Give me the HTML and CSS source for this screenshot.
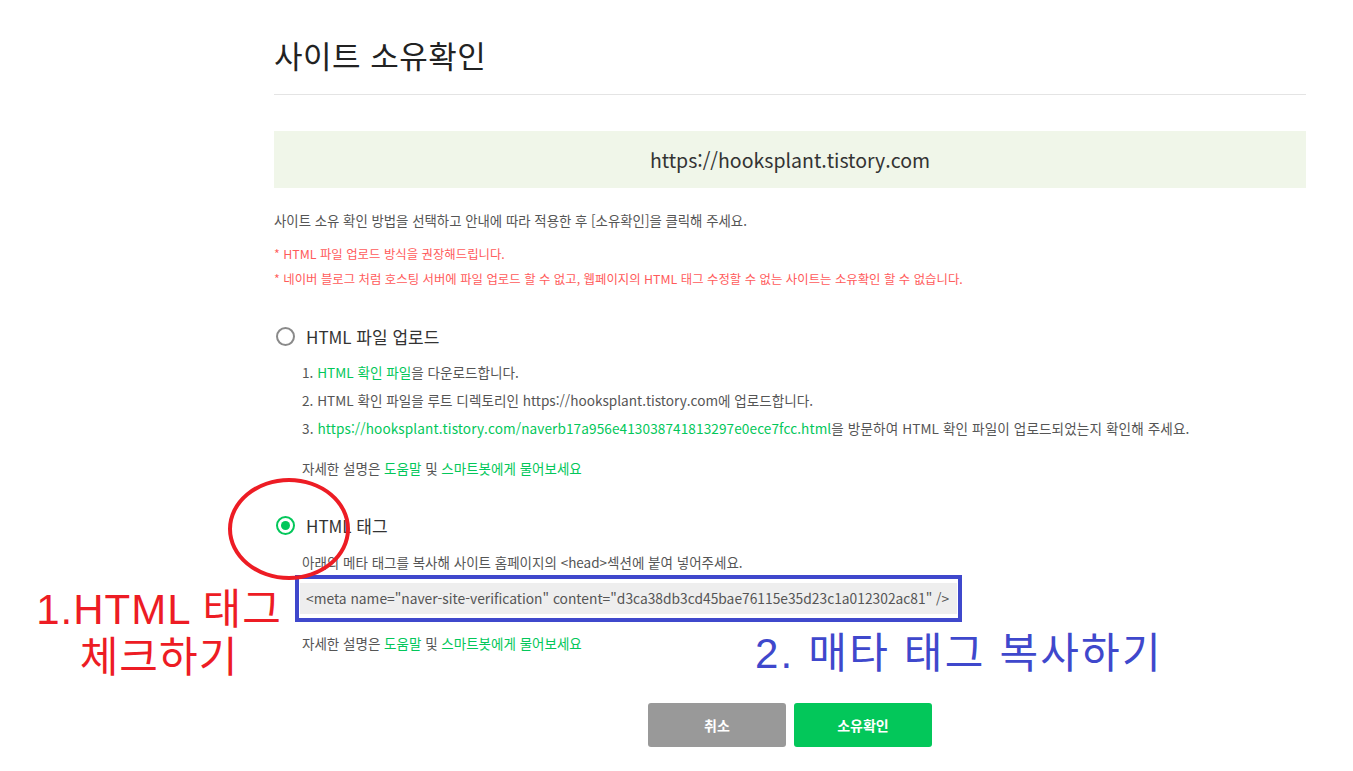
FILE: index.html
```html
<!DOCTYPE html>
<html lang="ko">
<head>
    <meta charset="UTF-8">
    <title>사이트 소유확인</title>
    <link rel="stylesheet" href="styles.css">
</head>
<body>
    <div class="page">
        <h1 class="title">사이트 소유확인</h1>

        <div class="site-url">https://hooksplant.tistory.com</div>

        <p class="intro">사이트 소유 확인 방법을 선택하고 안내에 따라 적용한 후 [소유확인]을 클릭해 주세요.</p>
        <p class="notice">* HTML 파일 업로드 방식을 권장해드립니다.</p>
        <p class="notice">* 네이버 블로그 처럼 호스팅 서버에 파일 업로드 할 수 없고, 웹페이지의 HTML 태그 수정할 수 없는 사이트는 소유확인 할 수 없습니다.</p>

        <div class="method method-file">
            <label class="radio-row">
                <span class="radio"></span>
                <span class="radio-label">HTML 파일 업로드</span>
            </label>
            <ol class="steps">
                <li>1. <a class="link">HTML 확인 파일</a>을 다운로드합니다.</li>
                <li>2. HTML 확인 파일을 루트 디렉토리인 https://hooksplant.tistory.com에 업로드합니다.</li>
                <li class="step-long">3. <a class="link">https://hooksplant.tistory.com/naverb17a956e413038741813297e0ece7fcc.html</a>을 방문하여 HTML 확인 파일이 업로드되었는지 확인해 주세요.</li>
            </ol>
            <p class="help">자세한 설명은 <a class="link">도움말</a> 및 <a class="link">스마트봇에게 물어보세요</a></p>
        </div>

        <div class="method method-tag">
            <label class="radio-row">
                <span class="radio checked"></span>
                <span class="radio-label">HTML 태그</span>
            </label>
            <p class="tag-desc">아래의 메타 태그를 복사해 사이트 홈페이지의 &lt;head&gt;섹션에 붙여 넣어주세요.</p>
            <div class="mark-box">
                <div class="meta-code">&lt;meta name="naver-site-verification" content="d3ca38db3cd45bae76115e35d23c1a012302ac81" /&gt;</div>
            </div>
            <p class="help help-tag">자세한 설명은 <a class="link">도움말</a> 및 <a class="link">스마트봇에게 물어보세요</a></p>
        </div>

        <div class="actions">
            <button class="btn btn-cancel">취소</button>
            <button class="btn btn-ok">소유확인</button>
        </div>
    </div>

    <!-- annotations drawn over the screenshot -->
    <div class="mark-circle"></div>
    <div class="note note-red">1.HTML 태그<br>체크하기</div>
    <div class="note note-blue">2. 매타 태그 복사하기</div>
</body>
</html>
```

FILE: styles.css
```css
:root {
    --green: #03c75a;
    --text: #555;
    --dark: #222;
    --red-note: #ed1c24;
    --blue-note: #3f48cc;
}

body {
    margin: 0;
    font-family: "Noto Sans CJK KR", "Noto Sans", sans-serif;
    color: var(--text);
    background: #fff;
}

.page {
    width: 1032px;
    margin-left: 274px;
}

.title {
    margin: 35px 0 0 0;
    padding-bottom: 19px;
    border-bottom: 1px solid #e4e4e4;
    font-size: 31px;
    line-height: 40px;
    font-weight: 400;
    letter-spacing: 0.5px;
    color: var(--dark);
}

.site-url {
    margin-top: 36px;
    height: 57px;
    line-height: 57px;
    background: #f0f6e9;
    text-align: center;
    font-size: 19.5px;
    color: #333;
}

p {
    margin: 0;
}

.intro {
    margin-top: 22px;
    font-size: 13.4px;
    line-height: 20px;
    color: #555;
}

.notice {
    font-size: 12.4px;
    line-height: 25px;
    color: #ff5b5b;
}

.intro + .notice {
    margin-top: 12px;
}

.radio-row {
    display: flex;
    align-items: center;
    height: 24px;
    padding-left: 2px;
}

.radio {
    width: 19px;
    height: 19px;
    box-sizing: border-box;
    border: 2px solid #8a8a8a;
    border-radius: 50%;
    display: flex;
    align-items: center;
    justify-content: center;
}

.radio.checked {
    border-color: var(--green);
}

.radio.checked::after {
    content: '';
    width: 9px;
    height: 9px;
    border-radius: 50%;
    background: var(--green);
}

.radio-label {
    margin-left: 11px;
    font-size: 17px;
    color: #333;
}

.method-file {
    margin-top: 32px;
}

.method-tag {
    margin-top: 35px;
}

.steps {
    list-style: none;
    margin: 10px 0 0 0;
    padding-left: 28px;
    font-size: 13.6px;
    line-height: 28px;
}

.step-long {
    letter-spacing: 0.1px;
}

.link {
    color: var(--green);
    text-decoration: none;
}

.help {
    margin-top: 16px;
    padding-left: 28px;
    font-size: 13.5px;
    line-height: 20px;
}

.tag-desc {
    margin-top: 15px;
    padding-left: 28px;
    font-size: 13.5px;
    line-height: 20px;
}

.mark-box {
    display: inline-block;
    margin: 3px 0 0 21px;
    border: 4px solid var(--blue-note);
    padding: 4px 1px 4px 1px;
}

.meta-code {
    height: 31px;
    line-height: 31px;
    padding: 0 8px 0 6px;
    background: #eee;
    font-size: 13.8px;
    color: #555;
}

.help-tag {
    margin-top: 11px;
}

.actions {
    display: flex;
    justify-content: center;
    gap: 8px;
    margin-top: 50px;
}

.btn {
    width: 138px;
    height: 44px;
    border: none;
    border-radius: 3px;
    font-family: inherit;
    font-size: 14px;
    font-weight: 700;
    color: #fff;
    cursor: pointer;
}

.btn-cancel {
    background: #999;
}

.btn-ok {
    background: var(--green);
}

/* annotations */
.mark-circle {
    position: absolute;
    left: 228px;
    top: 478px;
    width: 122px;
    height: 102px;
    box-sizing: border-box;
    border: 4px solid var(--red-note);
    border-radius: 50%;
}

.note {
    position: absolute;
    font-family: "Liberation Sans", "Noto Sans CJK KR", sans-serif;
    font-size: 42px;
    line-height: 48px;
}

.note-red {
    left: 34px;
    top: 586px;
    width: 250px;
    text-align: center;
    letter-spacing: 1px;
    color: var(--red-note);
}

.note-blue {
    left: 755px;
    top: 630px;
    letter-spacing: 2.2px;
    color: var(--blue-note);
}
```
